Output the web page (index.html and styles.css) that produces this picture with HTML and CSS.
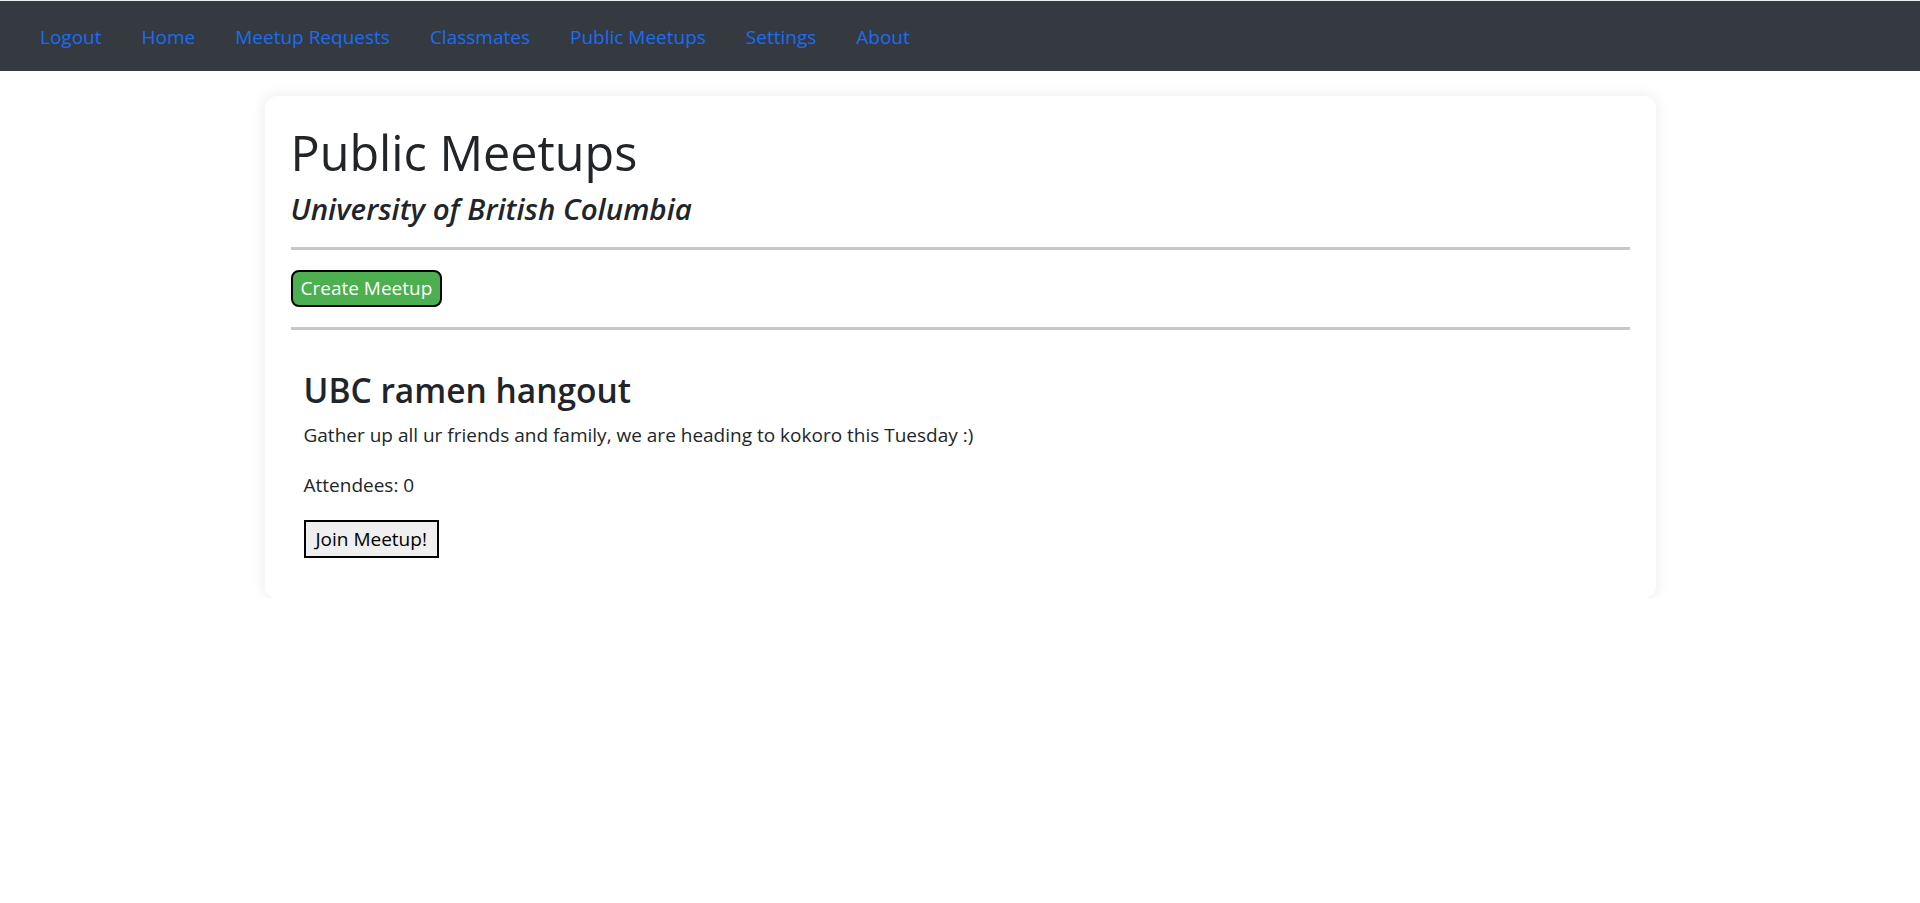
FILE: index.html
```html
<!DOCTYPE html>
<html lang="en">
<head>
<meta charset="utf-8">
<title>Public Meetups</title>
<link rel="stylesheet" href="styles.css">
</head>
<body>
<nav class="navbar">
  <ul class="nav">
    <li><a class="nav-link" href="#">Logout</a></li>
    <li><a class="nav-link" href="#">Home</a></li>
    <li><a class="nav-link" href="#">Meetup Requests</a></li>
    <li><a class="nav-link" href="#">Classmates</a></li>
    <li><a class="nav-link" href="#">Public Meetups</a></li>
    <li><a class="nav-link" href="#">Settings</a></li>
    <li><a class="nav-link" href="#">About</a></li>
  </ul>
</nav>
<main class="card">
  <h1 class="title">Public Meetups</h1>
  <h4 class="subtitle">University of British Columbia</h4>
  <hr class="rule">
  <button class="btn-create" type="button">Create Meetup</button>
  <hr class="rule">
  <section class="meetup">
    <h2 class="meetup-title">UBC ramen hangout</h2>
    <p class="meetup-text">Gather up all ur friends and family, we are heading to kokoro this Tuesday :)</p>
    <p class="meetup-text">Attendees: 0</p>
    <button class="btn-join" type="button">Join Meetup!</button>
  </section>
</main>
</body>
</html>
```
FILE: styles.css
```css
html, body {
  margin: 0;
  padding: 0;
  background: #ffffff;
}
body {
  font-family: "Open Sans", "Noto Sans", sans-serif;
  font-size: 19px;
  color: #212529;
}
.navbar {
  border-top: 1px solid #eeeeee;
  background: #343a40;
  height: 70px;
  display: flex;
  align-items: center;
  padding: 0 0 0 40px;
}
.nav {
  list-style: none;
  margin: 2px 0 0;
  padding: 0;
  display: flex;
  gap: 40px;
}
.nav-link {
  color: #1a6cf5;
  text-decoration: none;
  font-size: 19px;
  line-height: 30px;
  display: block;
}
.card {
  width: 1339px;
  margin: 25px auto 0;
  padding: 26px 26px 40px;
  background: #ffffff;
  border-radius: 12px;
  box-shadow: 0 0 16px rgba(0, 0, 0, 0.09);
}
.title {
  margin: 0 0 9px;
  font-size: 48.5px;
  font-weight: 500;
  line-height: 60px;
}
.subtitle {
  margin: 0 0 9px;
  font-size: 29.5px;
  font-style: italic;
  font-weight: 600;
  line-height: 36px;
}
.rule {
  margin: 20px 0;
  border: 0;
  height: 3px;
  background: #c8c8c8;
}
.btn-create {
  display: block;
  font-family: inherit;
  font-size: 19px;
  line-height: 29px;
  color: #ffffff;
  background: #4caf50;
  border: 2px solid #000000;
  border-radius: 8px;
  padding: 2px 8px;
  cursor: pointer;
}
.meetup {
  padding: 16px 13px 0;
}
.meetup-title {
  margin: 0 0 6px;
  font-size: 33.5px;
  font-weight: 600;
  line-height: 48px;
}
.meetup-text {
  margin: 0 0 20px;
  line-height: 30px;
}
.btn-join {
  display: block;
  font-family: inherit;
  font-size: 19px;
  line-height: 30px;
  color: #000000;
  background: #efefef;
  border: 2px solid #000000;
  border-radius: 0;
  padding: 2px 10px;
}
```
